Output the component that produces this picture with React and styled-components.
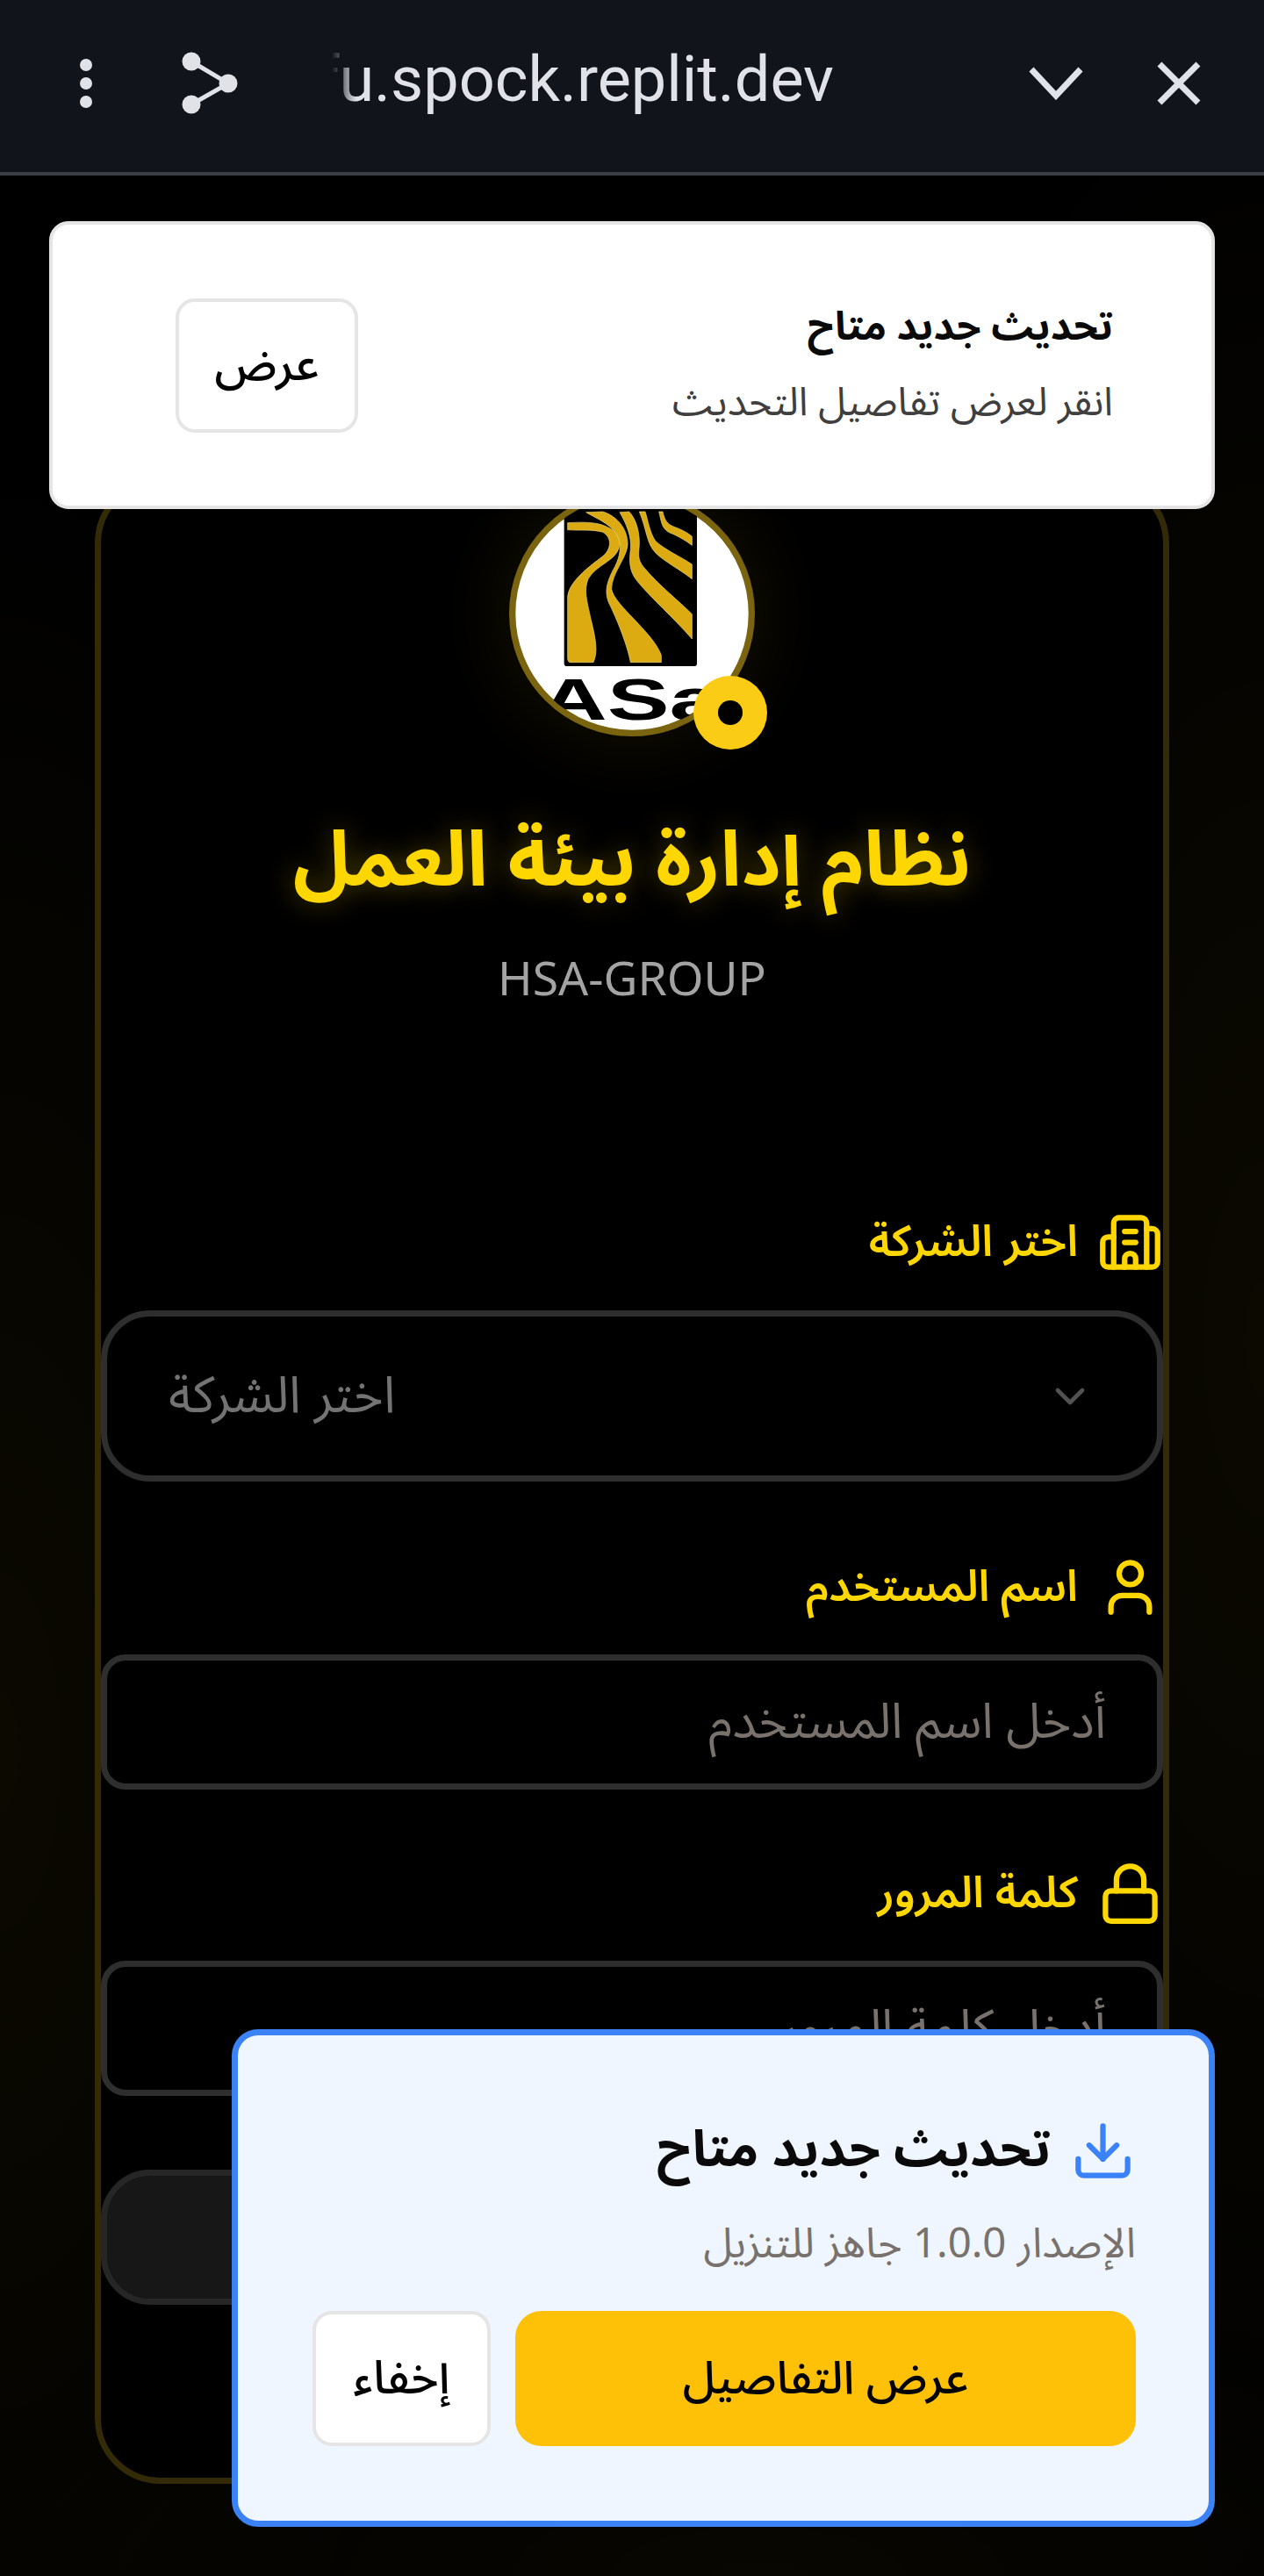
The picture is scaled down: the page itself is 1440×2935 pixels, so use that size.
import React from "react";
import styled, { createGlobalStyle } from "styled-components";
import { Building2, User, Lock, Download, ChevronDown } from "lucide-react";

const Global = createGlobalStyle`
  * { box-sizing: border-box; }
  html, body { margin: 0; padding: 0; background: #000; }
  body { font-family: "Noto Sans Arabic", "Noto Sans", sans-serif; }
`;

const Screen = styled.div`
  position: relative;
  width: 1440px;
  height: 2935px;
  overflow: hidden;
  background:
    radial-gradient(ellipse 520px 1500px at 100% 52%, rgba(255, 215, 0, 0.045), transparent 100%),
    radial-gradient(ellipse 520px 1500px at 0% 68%, rgba(255, 215, 0, 0.045), transparent 100%),
    radial-gradient(ellipse 900px 300px at 60% 100%, rgba(255, 215, 0, 0.03), transparent 100%),
    #000;
`;

const TopBar = styled.header`
  height: 200px;
  background: #11141a;
  border-bottom: 4px solid #3a3d42;
  display: flex;
  align-items: center;
  padding: 0 0 6px 0;
  color: #e1e2e8;
`;

const MenuIcon = styled.svg`
  width: 20px;
  height: 60px;
  margin-left: 88px;
  flex: none;
`;

const ShareIcon = styled.svg`
  width: 64px;
  height: 72px;
  margin-left: 99px;
  flex: none;
`;

const Domain = styled.div`
  width: 572px;
  margin-left: 107px;
  overflow: hidden;
  display: flex;
  justify-content: flex-end;
  font-family: Roboto, sans-serif;
  font-size: 72px;
  line-height: 84px;
  white-space: nowrap;
  margin-top: -8px;
  mask-image: linear-gradient(to right, transparent 0, #000 28px);
`;

const ChevronIcon = styled.svg`
  width: 62px;
  height: 38px;
  margin-left: 222px;
  flex: none;
`;

const CloseIcon = styled.svg`
  width: 50px;
  height: 50px;
  margin-left: 84px;
  flex: none;
`;

const Card = styled.main`
  width: 1224px;
  height: 2286px;
  margin: 344px auto 0;
  padding-top: 8px;
  background: #000;
  border: 7px solid #332a07;
  border-radius: 75px;
  display: flex;
  flex-direction: column;
  align-items: center;
  direction: rtl;
`;

const LogoWrap = styled.div`
  position: relative;
  width: 280px;
  height: 280px;
  border-radius: 50%;
  box-shadow: 0 0 90px rgba(255, 215, 0, 0.09);
  flex: none;
`;

const LogoSvg = styled.svg`
  display: block;
  width: 280px;
  height: 280px;
`;

const Badge = styled.span`
  position: absolute;
  left: 210px;
  top: 211px;
  width: 84px;
  height: 84px;
  border-radius: 50%;
  background: #facc15;
  display: flex;
  align-items: center;
  justify-content: center;
  &::after {
    content: "";
    width: 28px;
    height: 28px;
    border-radius: 50%;
    background: #000;
  }
`;

const Title = styled.h1`
  margin: 83px 0 0;
  color: #ffd700;
  font-size: 87.5px;
  line-height: 120px;
  font-weight: 700;
  text-shadow: 0 0 30px rgba(255, 215, 0, 0.3);
`;

const Subtitle = styled.p`
  margin: 40px 0 0;
  color: #a3a3a3;
  font-size: 53.5px;
  line-height: 70px;
`;

const Form = styled.div`
  width: 1210px;
  margin-top: 226px;
  display: flex;
  flex-direction: column;
`;

const Label = styled.label`
  height: 75px;
  display: flex;
  align-items: center;
  gap: 22px;
  color: #ffd700;
  font-size: 49.5px;
  font-weight: 600;
  svg { flex: none; }
`;

const SelectBox = styled.div`
  height: 195px;
  margin-top: 40px;
  padding: 0 71px 0 70px;
  border: 7px solid #2e2e2e;
  border-radius: 56px;
  display: flex;
  align-items: center;
  justify-content: space-between;
  color: #737373;
  font-size: 58px;
  svg { color: #525252; }
`;

const TextInput = styled.input`
  display: block;
  width: 100%;
  height: 154px;
  margin-top: 39.5px;
  padding: 0 58px;
  background: transparent;
  border: 7px solid #2e2e2e;
  border-radius: 28px;
  font-family: inherit;
  font-size: 56px;
  color: #fff;
  direction: rtl;
  &::placeholder { color: #78716c; opacity: 1; }
`;

const Field = styled.div`
  margin-top: ${(p) => p.$top}px;
`;

const SubmitButton = styled.div`
  height: 154px;
  margin-top: 84px;
  background: #171717;
  border: 7px solid #262626;
  border-radius: 56px;
`;

const TopToast = styled.aside`
  position: absolute;
  left: 56px;
  top: 252px;
  width: 1328px;
  height: 328px;
  padding: 0 112px 0 140px;
  background: #fff;
  border: 4px solid #e5e5e5;
  border-radius: 22px;
  direction: rtl;
  display: flex;
  align-items: center;
  justify-content: space-between;
`;

const ToastText = styled.div`
  display: flex;
  flex-direction: column;
  gap: 14px;
`;

const ToastTitle = styled.div`
  color: #0a0a0a;
  font-size: 45px;
  line-height: 72px;
  font-weight: 700;
`;

const ToastBody = styled.div`
  color: #3f3f3f;
  font-size: 45px;
  line-height: 72px;
`;

const GhostButton = styled.button`
  background: #fff;
  border: 4px solid #e5e5e5;
  border-radius: ${(p) => p.$radius}px;
  width: ${(p) => p.$w}px;
  height: ${(p) => p.$h}px;
  color: #000;
  font-family: inherit;
  font-size: 53px;
  font-weight: 500;
  padding: 0;
  flex: none;
`;

const UpdateCard = styled.aside`
  position: absolute;
  left: 264px;
  top: 2312px;
  width: 1120px;
  height: 567px;
  padding: 83px;
  background: #eff6ff;
  border: 7.5px solid #3b82f6;
  border-radius: 30px;
  direction: rtl;
`;

const UpdateHead = styled.div`
  height: 90px;
  margin-top: 3px;
  display: flex;
  align-items: center;
  gap: 22px;
  color: #3b82f6;
`;

const UpdateTitle = styled.div`
  color: #0a0a0a;
  font-size: 58px;
  line-height: 90px;
  font-weight: 700;
`;

const UpdateBody = styled.div`
  margin-top: 27px;
  color: #78716c;
  font-size: 47.3px;
  line-height: 70px;
`;

const UpdateActions = styled.div`
  margin-top: 41px;
  display: flex;
  gap: 28px;
`;

const PrimaryButton = styled.button`
  width: 707px;
  height: 154px;
  background: #ffc107;
  border: none;
  border-radius: 30px;
  color: #000;
  font-family: inherit;
  font-size: 52px;
  font-weight: 500;
  padding: 0;
`;

const LogoType = styled.text`
  direction: ltr;
  font-family: "Liberation Sans", sans-serif;
  font-weight: 700;
  font-size: 200px;
  fill: #000;
`;

const Logo = () => (
  <LogoSvg viewBox="120 58 840 840">
    <defs>
      <clipPath id="logoClip"><circle cx="540" cy="478" r="400" /></clipPath>
    </defs>
    <circle cx="540" cy="478" r="409" fill="#fff" stroke="#7a6410" strokeWidth="22" />
    <g clipPath="url(#logoClip)">
      <rect x="308" y="90" width="454" height="568" rx="10" fill="#000" />
      <g fill="#dcab12" stroke="#e9d98a" strokeWidth="2">
        <path d="M320 168C370 165 420 165 450 180C490 195 505 225 495 255C480 300 420 310 390 360C375 400 385 430 400 500C415 560 425 610 408 645L330 645Q320 645 320 630L320 420C325 370 390 320 430 290C470 265 475 220 440 200C410 190 360 195 320 192Z" />
        <path d="M383 132L440 130C490 145 525 190 525 240C525 285 470 340 470 395C480 450 610 540 640 620L640 645L535 645C525 590 490 500 460 440C445 400 455 370 475 330C495 295 505 260 495 225C480 175 420 155 383 132Z" />
        <path d="M498 132L530 130C550 150 565 190 565 235C565 270 555 290 580 320C630 380 700 435 745 480L745 565C680 490 610 430 560 370C530 335 530 300 535 260C540 215 520 170 498 132Z" />
        <path d="M565 130L585 130C595 160 600 200 620 230C650 260 710 285 745 310L745 360C700 325 650 300 620 270C590 240 590 190 565 130Z" />
        <path d="M632 130L645 130C650 150 655 170 680 180C705 190 730 200 745 215L745 245C720 225 690 210 665 200C640 185 640 160 632 130Z" />
      </g>
      <LogoType x="225" y="840" textLength="620" lengthAdjust="spacingAndGlyphs">ASa</LogoType>
    </g>
  </LogoSvg>
);

export default function App() {
  return (
    <Screen>
      <Global />
      <TopBar>
        <MenuIcon viewBox="0 0 20 60" fill="currentColor">
          <circle cx="10" cy="9" r="7" />
          <circle cx="10" cy="30" r="7" />
          <circle cx="10" cy="51" r="7" />
        </MenuIcon>
        <ShareIcon viewBox="0 0 64 72" fill="currentColor">
          <path d="M11 11L53 36L11 60" fill="none" stroke="currentColor" strokeWidth="5" />
          <circle cx="11" cy="11" r="10.5" />
          <circle cx="53" cy="36" r="10.5" />
          <circle cx="11" cy="60" r="10.5" />
        </ShareIcon>
        <Domain>fu.spock.replit.dev</Domain>
        <ChevronIcon viewBox="0 0 62 38" fill="none" stroke="currentColor" strokeWidth="7">
          <path d="M3 3L31 33L59 3" />
        </ChevronIcon>
        <CloseIcon viewBox="0 0 50 50" fill="none" stroke="currentColor" strokeWidth="7">
          <path d="M3 3L47 47M47 3L3 47" />
        </CloseIcon>
      </TopBar>

      <Card>
        <LogoWrap>
          <Logo />
          <Badge />
        </LogoWrap>
        <Title>نظام إدارة بيئة العمل</Title>
        <Subtitle>HSA-GROUP</Subtitle>
        <Form>
          <Field $top={0}>
            <Label><Building2 size={75} strokeWidth={2} />اختر الشركة</Label>
            <SelectBox>
              <ChevronDown size={56} strokeWidth={2} />
              <span>اختر الشركة</span>
            </SelectBox>
          </Field>
          <Field $top={82.5}>
            <Label><User size={75} strokeWidth={2} />اسم المستخدم</Label>
            <TextInput placeholder="أدخل اسم المستخدم" />
          </Field>
          <Field $top={80.5}>
            <Label><Lock size={75} strokeWidth={2} />كلمة المرور</Label>
            <TextInput placeholder="أدخل كلمة المرور" />
          </Field>
          <SubmitButton />
        </Form>
      </Card>

      <TopToast>
        <ToastText>
          <ToastTitle>تحديث جديد متاح</ToastTitle>
          <ToastBody>انقر لعرض تفاصيل التحديث</ToastBody>
        </ToastText>
        <GhostButton $w={208} $h={153} $radius={22}>عرض</GhostButton>
      </TopToast>

      <UpdateCard>
        <UpdateHead>
          <Download size={75} strokeWidth={2} />
          <UpdateTitle>تحديث جديد متاح</UpdateTitle>
        </UpdateHead>
        <UpdateBody>الإصدار 1.0.0 جاهز للتنزيل</UpdateBody>
        <UpdateActions>
          <PrimaryButton>عرض التفاصيل</PrimaryButton>
          <GhostButton $w={203} $h={154} $radius={22}>إخفاء</GhostButton>
        </UpdateActions>
      </UpdateCard>
    </Screen>
  );
}
